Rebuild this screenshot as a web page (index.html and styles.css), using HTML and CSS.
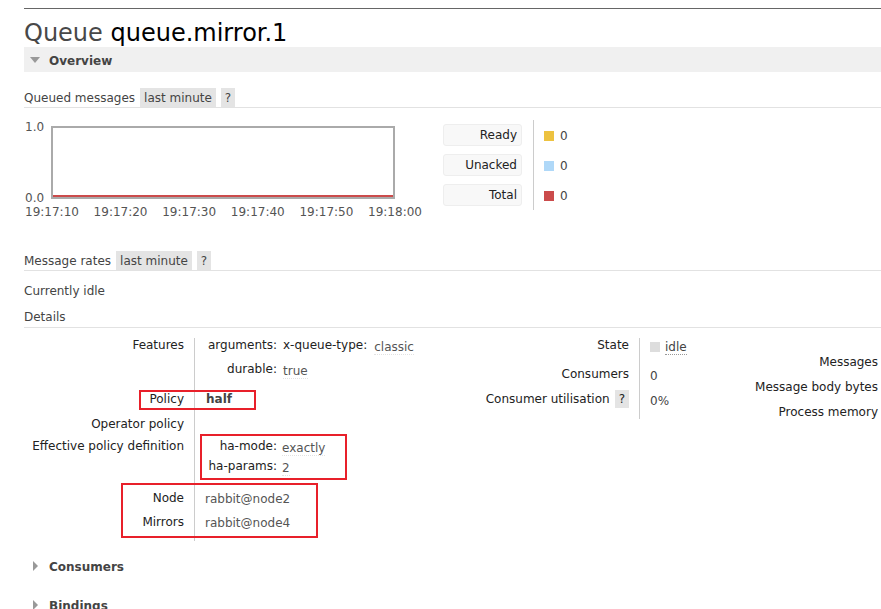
FILE: index.html
```html
<!DOCTYPE html>
<html lang="en">
<head>
<meta charset="utf-8">
<title>Queue queue.mirror.1</title>
<link rel="stylesheet" href="styles.css">
</head>
<body>
<div class="page">
  <div class="rule"></div>
  <h1>Queue <b>queue.mirror.1</b></h1>

  <div class="sec open"><span class="tri-down"></span><span class="sec-t">Overview</span></div>

  <div class="sub"><span>Queued messages</span><span class="badge">last minute</span><span class="badge">?</span></div>

  <div class="chart-row">
    <div class="chart">
      <div class="plot">
        <div class="yaxis"><span>1.0</span><span>0.0</span></div>
        <div class="box"><div class="redline"></div></div>
      </div>
      <div class="xaxis">
        <span>19:17:10</span><span>19:17:20</span><span>19:17:30</span><span>19:17:40</span><span>19:17:50</span><span>19:18:00</span>
      </div>
    </div>
    <div class="legend">
      <div class="lab"><span>Ready</span></div>
      <div class="val"><i class="sq ready"></i>0</div>
      <div class="lab"><span>Unacked</span></div>
      <div class="val"><i class="sq unacked"></i>0</div>
      <div class="lab"><span>Total</span></div>
      <div class="val"><i class="sq total"></i>0</div>
    </div>
  </div>

  <div class="sub rates"><span>Message rates</span><span class="badge">last minute</span><span class="badge">?</span></div>
  <div class="idle-text">Currently idle</div>
  <div class="sub plain"><span>Details</span></div>

  <div class="details">
    <div class="kv left">
      <div class="k r-feat">Features</div>
      <div class="v r-feat">
        <div class="line"><span class="sk">arguments:</span><span class="sv"><span class="nk">x-queue-type:</span><span class="dv">classic</span></span></div>
        <div class="line"><span class="sk">durable:</span><span class="sv"><span class="dv">true</span></span></div>
      </div>

      <div class="k r-simple">Policy</div>
      <div class="v r-simple"><b class="pol">half</b></div>

      <div class="k r-simple">Operator policy</div>
      <div class="v r-simple"></div>

      <div class="k r-eff">Effective policy definition</div>
      <div class="v r-eff">
        <div class="line2"><span class="sk">ha-mode:</span><span class="dv val-shift">exactly</span></div>
        <div class="line2"><span class="sk">ha-params:</span><span class="dv val-shift">2</span></div>
      </div>

      <div class="k r-node">Node</div>
      <div class="v r-node"><span class="plainv">rabbit@node2</span></div>

      <div class="k r-mirr">Mirrors</div>
      <div class="v r-mirr"><span class="plainv">rabbit@node4</span></div>
    </div>

    <div class="kv right">
      <div class="k rr1">State</div>
      <div class="v rr1"><i class="state-sq"></i><span class="dotted">idle</span></div>

      <div class="k rr2">Consumers</div>
      <div class="v rr2">0</div>

      <div class="k rr3"><span>Consumer utilisation</span><span class="badge q">?</span></div>
      <div class="v rr3">0%</div>
    </div>

    <div class="far">
      <div>Messages</div>
      <div>Message body bytes</div>
      <div>Process memory</div>
    </div>

    <div class="mark mark-policy"></div>
    <div class="mark mark-ha"></div>
    <div class="mark mark-node"></div>
  </div>

  <div class="sec closed first"><span class="tri-right"></span><span class="sec-t">Consumers</span></div>
  <div class="sec closed"><span class="tri-right"></span><span class="sec-t">Bindings</span></div>
</div>
</body>
</html>
```

FILE: styles.css
```css
html, body {
  margin: 0;
  padding: 0;
}
body {
  font-family: "DejaVu Sans", Verdana, sans-serif;
  font-size: 12px;
  color: #484848;
  background: #fff;
  overflow: hidden;
}
.page {
  padding: 8px 0 0 24px;
}
.rule {
  border-top: 1px solid #666;
}
h1 {
  margin: 0;
  height: 38px;
  box-sizing: border-box;
  padding-top: 11px;
  font-size: 24px;
  font-weight: normal;
  line-height: 27px;
  color: #484848;
  white-space: nowrap;
  overflow: visible;
}
h1 b {
  font-weight: normal;
  color: #000;
}

/* section headers */
.sec {
  height: 25px;
  font-weight: bold;
  color: #444;
  display: flex;
  align-items: center;
}
.sec-t {
  line-height: 25px;
  padding-top: 2px;
  height: 25px;
  box-sizing: border-box;
}
.sec.open {
  background: #f0f0f0;
}
.sec.closed {
  margin-top: 14px;
}
.sec.closed.first {
  margin-top: 12px;
}
.tri-down {
  width: 0;
  height: 0;
  border-left: 5px solid transparent;
  border-right: 5px solid transparent;
  border-top: 6px solid #999;
  margin: 1px 9px 0 6px;
}
.tri-right {
  width: 0;
  height: 0;
  border-top: 5px solid transparent;
  border-bottom: 5px solid transparent;
  border-left: 5px solid #999;
  margin: 0 11px 0 9px;
}

/* sub headers */
.sub {
  margin-top: 16px;
  height: 19px;
  border-bottom: 1px solid #e2e2e2;
  display: flex;
  gap: 5px;
  color: #444;
}
.sub > span {
  box-sizing: border-box;
  padding-top: 1px;
  line-height: 18px;
}
.sub.rates {
  margin-top: 32px;
}
.sub.plain {
  margin-top: 6px;
  height: 20px;
}
.sub.plain > span {
  line-height: 19px;
}
.badge {
  background: #e4e4e4;
  padding: 0 4px;
}
.sub > .badge {
  padding: 1px 4px 0;
}
.idle-text {
  margin-top: 10px;
  line-height: 20px;
  color: #444;
}

/* chart */
.chart-row {
  display: flex;
  align-items: flex-start;
  margin-top: 12px;
}
.chart {
  width: 398px;
}
.plot {
  display: flex;
  height: 85px;
}
.yaxis {
  width: 27px;
  display: flex;
  flex-direction: column;
  justify-content: space-between;
  line-height: 14px;
  color: #545454;
}
.yaxis span {
  padding-left: 1px;
}
.box {
  margin-top: 6px;
  width: 344px;
  height: 73px;
  box-sizing: border-box;
  border: 2px solid #aaa;
  display: flex;
  flex-direction: column;
  justify-content: flex-end;
}
.redline {
  height: 2px;
  background: #cb4b4b;
}
.xaxis {
  display: flex;
  justify-content: space-between;
  width: 397px;
  margin-left: 1px;
  line-height: 14px;
  color: #545454;
}

/* legend */
.legend {
  margin-left: 21px;
  display: grid;
  grid-template-columns: 90px auto;
}
.legend .lab {
  height: 30px;
  box-sizing: border-box;
  padding: 4px 11px 0 0;
}
.legend .lab span {
  display: block;
  height: 22px;
  box-sizing: border-box;
  border: 1px solid #eee;
  border-radius: 3px;
  background: #f8f8f8;
  text-align: right;
  padding-right: 4px;
  line-height: 20px;
  color: #222;
}
.legend .val {
  height: 30px;
  box-sizing: border-box;
  border-left: 1px solid #ccc;
  padding: 2px 0 0 10px;
  display: flex;
  align-items: center;
  color: #444;
}
.sq {
  display: block;
  width: 10px;
  height: 10px;
  margin-right: 6px;
}
.sq.ready { background: #edc240; }
.sq.unacked { background: #afd8f8; }
.sq.total { background: #cb4b4b; }

/* details */
.details {
  position: relative;
  display: flex;
  align-items: flex-start;
  margin-top: 10px;
  padding-right: 3px;
}
.kv {
  display: grid;
  line-height: 14px;
}
.kv .k {
  text-align: right;
  padding-right: 10px;
  color: #222;
  box-sizing: border-box;
  white-space: nowrap;
}
.kv .v {
  border-left: 1px solid #ccc;
  box-sizing: border-box;
  color: #555;
  white-space: nowrap;
}
.left {
  width: 430px;
  grid-template-columns: 170px 260px;
}
.left .v {
  padding-left: 12px;
}
.r-feat { height: 48px; }
.r-simple { height: 25px; padding-top: 6px; }
.r-eff { height: 43px; padding-top: 3px; }
.r-node { height: 32px; padding-top: 12px; }
.r-mirr { height: 30px; padding-top: 4px; }

.line {
  display: flex;
  height: 24px;
}
.line2 {
  display: flex;
  height: 20px;
}
.sk {
  width: 70px;
  text-align: right;
  color: #222;
  flex: none;
}
.sv {
  display: flex;
  padding-left: 6px;
}
.nk {
  color: #222;
  margin-right: 7px;
}
.dv {
  display: block;
  margin-top: 2px;
  height: 14px;
  border-bottom: 1px dotted #e2e2e2;
  color: #555;
}
.val-shift {
  margin-left: 5px;
}
.pol {
  color: #444;
  margin-left: -1px;
}
.plainv {
  margin-left: -2px;
  display: inline-block;
  padding-top: 1px;
}

.right {
  width: 296px;
  grid-template-columns: 185px 111px;
}
.right .v {
  padding-left: 10px;
  padding-top: 2px;
  color: #444;
}
.rr1 { height: 29px; }
.rr2 { height: 25px; }
.rr3 { height: 27px; }
.right .k.rr3 {
  display: flex;
  justify-content: flex-end;
  align-items: flex-start;
  gap: 5px;
}
.badge.q {
  line-height: 18px;
  margin-top: -2px;
}
.state-sq {
  display: inline-block;
  width: 10px;
  height: 10px;
  background: #ddd;
  margin-right: 5px;
  vertical-align: -1px;
}
.dotted {
  border-bottom: 1px dotted #999;
  color: #444;
}

.far {
  flex: 1;
  text-align: right;
  padding-top: 17px;
  line-height: 14px;
  color: #222;
  white-space: nowrap;
}
.far div {
  height: 25px;
}

/* annotation marks */
.mark {
  position: absolute;
  box-sizing: border-box;
  border: 2px solid #e8202a;
}
.mark-policy {
  left: 115px;
  top: 52px;
  width: 117px;
  height: 20px;
}
.mark-ha {
  left: 176px;
  top: 96px;
  width: 147px;
  height: 46px;
}
.mark-node {
  left: 97px;
  top: 145px;
  width: 197px;
  height: 55px;
}
```
